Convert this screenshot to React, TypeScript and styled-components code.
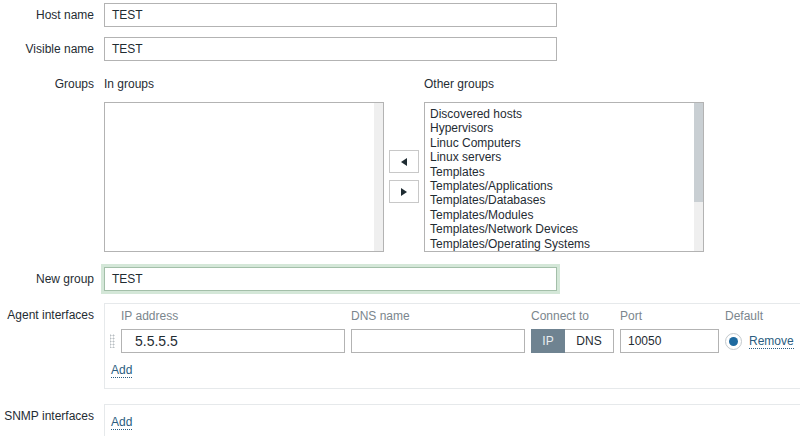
import React from "react";
import styled, { createGlobalStyle } from "styled-components";

const Global = createGlobalStyle`
  html, body { margin: 0; padding: 0; background: #fff; overflow: hidden; }
  body { font-family: "Liberation Sans", Arial, sans-serif; font-size: 12px; color: #1f2c33; }
`;

const Form = styled.div`
  width: 800px;
  padding-top: 3px;
  display: flex;
  flex-direction: column;
`;

const Row = styled.div<{ $mt?: number }>`
  display: grid;
  grid-template-columns: 94px 1fr;
  column-gap: 10px;
  margin-top: ${(p) => p.$mt ?? 0}px;
  align-items: start;
`;

const Label = styled.div<{ $pt?: number }>`
  text-align: right;
  line-height: 14px;
  padding-top: ${(p) => p.$pt ?? 5}px;
  white-space: nowrap;
  color: #1f2c33;
`;

const TextInput = styled.div<{ $w?: number; $focus?: boolean; $big?: boolean }>`
  box-sizing: border-box;
  width: ${(p) => p.$w ?? 453}px;
  height: 24px;
  border: 1px solid ${(p) => (p.$focus ? "#a3bfa9" : "#b3b3b3")};
  background: #fff;
  padding: 0 ${(p) => (p.$big ? 13 : 7)}px;
  line-height: 22px;
  font-size: ${(p) => (p.$big ? 14 : 12)}px;
  color: #1f2c33;
  box-shadow: ${(p) => (p.$focus ? "0 0 0 3px #d4e7d8" : "none")};
`;

const GroupsArea = styled.div`
  display: flex;
  align-items: flex-start;
`;

const ListCol = styled.div`
  display: flex;
  flex-direction: column;
  width: 280px;
`;

const ListHeader = styled.div`
  line-height: 16px;
  height: 16px;
  padding-bottom: 10px;
`;

const ListBox = styled.div`
  box-sizing: border-box;
  height: 150px;
  border: 1px solid #b3b3b3;
  display: flex;
  background: #fff;
`;

const ListItems = styled.div`
  flex: 1;
  padding: 4px 5px;
  line-height: 14.4px;
  font-size: 12px;
  color: #1f2c33;
`;

const Scrollbar = styled.div<{ $thumb: number }>`
  width: 9px;
  background: #efefef;
  display: flex;
  flex-direction: column;
  &::before {
    content: "";
    display: block;
    height: ${(p) => p.$thumb}px;
    background: #c9cfd3;
  }
`;

const MoveButtons = styled.div`
  width: 30px;
  margin: 0 5px;
  padding-top: 74px;
  display: flex;
  flex-direction: column;
  gap: 7px;
`;

const MoveButton = styled.div`
  box-sizing: border-box;
  width: 30px;
  height: 23px;
  border: 1px solid #c8c8c8;
  background: #fff;
  display: flex;
  align-items: center;
  justify-content: center;
`;

const InterfaceBox = styled.div<{ $pb: number; $pt: number }>`
  box-sizing: border-box;
  width: 720px;
  border: 1px solid #e6e9eb;
  background: #fff;
  padding: ${(p) => p.$pt}px 0 ${(p) => p.$pb}px 5px;
`;

const IfaceGrid = styled.div`
  display: grid;
  grid-template-columns: 5px 224px 174px 83px 99px auto;
  column-gap: 6px;
  align-items: center;
`;

const ColHead = styled.div`
  line-height: 14px;
  color: #7b868d;
  margin-bottom: 6px;
`;

const Handle = styled.div`
  width: 5px;
  height: 14px;
  background-image: radial-gradient(circle, #b8bec2 0.9px, transparent 1.1px);
  background-size: 3px 3px;
  background-position: -1px 0;
`;

const Toggle = styled.div`
  display: flex;
  height: 24px;
  box-sizing: border-box;
`;

const ToggleBtn = styled.div<{ $active?: boolean }>`
  box-sizing: border-box;
  height: 24px;
  line-height: 22px;
  text-align: center;
  width: ${(p) => (p.$active ? 34 : 49)}px;
  background: ${(p) => (p.$active ? "#6f8391" : "#fff")};
  color: ${(p) => (p.$active ? "#e8edf0" : "#1f2c33")};
  border: 1px solid ${(p) => (p.$active ? "#6f8391" : "#b3b3b3")};
  border-left-width: ${(p) => (p.$active ? 1 : 0)}px;
`;

const DefaultCell = styled.div`
  display: flex;
  align-items: center;
  gap: 7px;
`;

const Radio = styled.div`
  box-sizing: border-box;
  width: 17px;
  height: 17px;
  border-radius: 50%;
  border: 1px solid #c3c9cd;
  display: flex;
  align-items: center;
  justify-content: center;
  &::after {
    content: "";
    width: 9px;
    height: 9px;
    border-radius: 50%;
    background: #1e6aa0;
  }
`;

const Link = styled.span`
  color: #2b5d80;
  line-height: 14px;
  border-bottom: 1px dotted #2b5d80;
`;

const AddRow = styled.div<{ $mt: number }>`
  margin-top: ${(p) => p.$mt}px;
  line-height: 14px;
  padding-left: 1px;
`;

const Tri = ({ dir }: { dir: "left" | "right" }) => (
  <svg width="6" height="8" viewBox="0 0 6 8">
    {dir === "left" ? <path d="M6 0 L0 4 L6 8 Z" fill="#1f2c33" /> : <path d="M0 0 L6 4 L0 8 Z" fill="#1f2c33" />}
  </svg>
);

const otherGroups = [
  "Discovered hosts",
  "Hypervisors",
  "Linuc Computers",
  "Linux servers",
  "Templates",
  "Templates/Applications",
  "Templates/Databases",
  "Templates/Modules",
  "Templates/Network Devices",
  "Templates/Operating Systems",
];

export default function App() {
  return (
    <>
      <Global />
      <Form>
        <Row>
          <Label>Host name</Label>
          <TextInput>TEST</TextInput>
        </Row>
        <Row $mt={10}>
          <Label>Visible name</Label>
          <TextInput>TEST</TextInput>
        </Row>
        <Row $mt={15}>
          <Label $pt={1}>Groups</Label>
          <GroupsArea>
            <ListCol>
              <ListHeader>In groups</ListHeader>
              <ListBox>
                <ListItems />
                <Scrollbar $thumb={0} />
              </ListBox>
            </ListCol>
            <MoveButtons>
              <MoveButton>
                <Tri dir="left" />
              </MoveButton>
              <MoveButton>
                <Tri dir="right" />
              </MoveButton>
            </MoveButtons>
            <ListCol>
              <ListHeader>Other groups</ListHeader>
              <ListBox>
                <ListItems>
                  {otherGroups.map((g) => (
                    <div key={g}>{g}</div>
                  ))}
                </ListItems>
                <Scrollbar $thumb={99} />
              </ListBox>
            </ListCol>
          </GroupsArea>
        </Row>
        <Row $mt={15}>
          <Label>New group</Label>
          <TextInput $focus>TEST</TextInput>
        </Row>
        <Row $mt={12}>
          <Label $pt={5}>Agent interfaces</Label>
          <InterfaceBox $pt={5} $pb={11}>
            <IfaceGrid>
              <span />
              <ColHead>IP address</ColHead>
              <ColHead>DNS name</ColHead>
              <ColHead>Connect to</ColHead>
              <ColHead>Port</ColHead>
              <ColHead>Default</ColHead>
              <Handle />
              <TextInput $w={224} $big>5.5.5.5</TextInput>
              <TextInput $w={174} />
              <Toggle>
                <ToggleBtn $active>IP</ToggleBtn>
                <ToggleBtn>DNS</ToggleBtn>
              </Toggle>
              <TextInput $w={99}>10050</TextInput>
              <DefaultCell>
                <Radio />
                <Link>Remove</Link>
              </DefaultCell>
            </IfaceGrid>
            <AddRow $mt={10}>
              <Link>Add</Link>
            </AddRow>
          </InterfaceBox>
        </Row>
        <Row $mt={15}>
          <Label $pt={5}>SNMP interfaces</Label>
          <InterfaceBox $pt={10} $pb={20}>
            <AddRow $mt={0}>
              <Link>Add</Link>
            </AddRow>
          </InterfaceBox>
        </Row>
      </Form>
    </>
  );
}
